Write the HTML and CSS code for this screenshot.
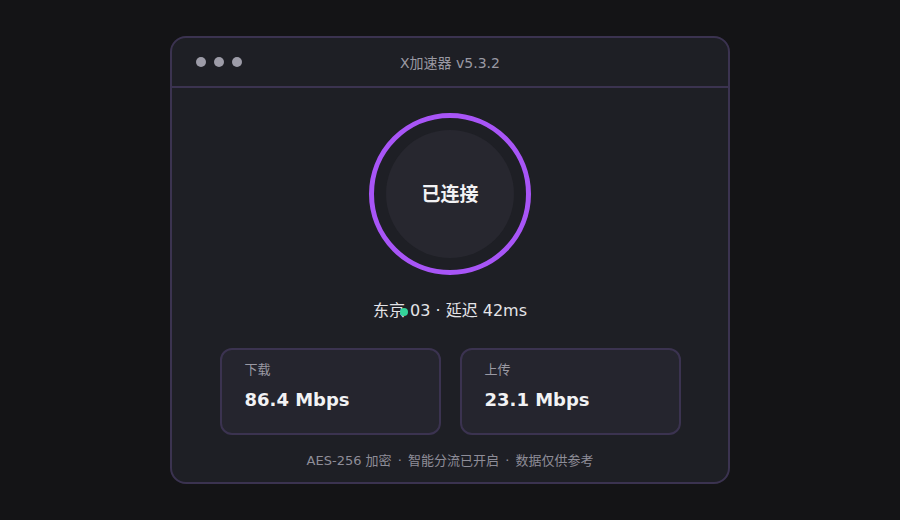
FILE: index.html
```html
<!DOCTYPE html>
<html lang="zh-CN">

<head>
    <meta charset="UTF-8">
    <title>X加速器</title>
    <link rel="stylesheet" href="styles.css">
</head>

<body>
    <div class="window">
        <div class="titlebar">
            <div class="dots">
                <span></span><span></span><span></span>
            </div>
            <div class="title">X加速器 v5.3.2</div>
        </div>

        <div class="content">
            <div class="ring">
                <div class="core">已连接</div>
            </div>

            <div class="location">
                <span class="status-dot"></span>东京 03 · 延迟 42ms
            </div>

            <div class="stats">
                <div class="card">
                    <div class="label">下载</div>
                    <div class="value">86.4 Mbps</div>
                </div>
                <div class="card">
                    <div class="label">上传</div>
                    <div class="value">23.1 Mbps</div>
                </div>
            </div>

            <div class="footer">AES-256 加密<span class="sep"> · </span>智能分流已开启<span class="sep"> · </span>数据仅供参考</div>
        </div>
    </div>
</body>

</html>
```

FILE: styles.css
```css
html,
body {
    height: 100%;
}

body {
    margin: 0;
    background-color: #141416;
    font-family: "DejaVu Sans", "Noto Sans CJK SC", sans-serif;
    display: flex;
    align-items: center;
    justify-content: center;
}

.window {
    width: 556px;
    height: 444px;
    background-color: #1e1f25;
    border: 2px solid #3b3350;
    border-radius: 16px;
    display: flex;
    flex-direction: column;
}

.titlebar {
    height: 48px;
    border-bottom: 2px solid #3b3350;
    display: flex;
    align-items: center;
    position: relative;
    padding: 0 24px;
}

.dots {
    display: flex;
    gap: 8px;
}

.dots span {
    width: 10px;
    height: 10px;
    border-radius: 50%;
    background-color: #9d9ca8;
}

.title {
    position: absolute;
    left: 0;
    right: 0;
    text-align: center;
    color: #9a99a3;
    font-size: 14px;
}

.content {
    flex: 1;
    display: flex;
    flex-direction: column;
    align-items: center;
    padding-top: 25px;
}

.ring {
    width: 152px;
    height: 152px;
    border: 5px solid #a855f7;
    border-radius: 50%;
    display: flex;
    align-items: center;
    justify-content: center;
}

.core {
    width: 128px;
    height: 128px;
    box-sizing: border-box;
    padding-bottom: 4px;
    border-radius: 50%;
    background-color: #27272f;
    color: #f2f2f4;
    font-size: 19px;
    font-weight: bold;
    display: flex;
    align-items: center;
    justify-content: center;
}

.location {
    margin-top: 25px;
    color: #e4e4e8;
    font-size: 16px;
    line-height: 22px;
    position: relative;
}

.status-dot {
    position: absolute;
    left: 27px;
    top: 8px;
    width: 8px;
    height: 8px;
    border-radius: 50%;
    background-color: #34d399;
}

.stats {
    margin-top: 26px;
    display: flex;
    gap: 19px;
}

.card {
    width: 217px;
    height: 83px;
    border: 2px solid #3b3350;
    border-radius: 12px;
    background-color: #25252e;
}

.label {
    margin: 11px 0 0 23px;
    font-size: 13px;
    color: #9a99a3;
    line-height: 18px;
}

.value {
    margin: 8px 0 0 23px;
    font-size: 18px;
    font-weight: bold;
    color: #f2f2f4;
    line-height: 26px;
}

.footer {
    margin-top: 17px;
    font-size: 13px;
    color: #8e8d98;
    line-height: 18px;
}

.sep {
    margin: 0 2px;
}
```
